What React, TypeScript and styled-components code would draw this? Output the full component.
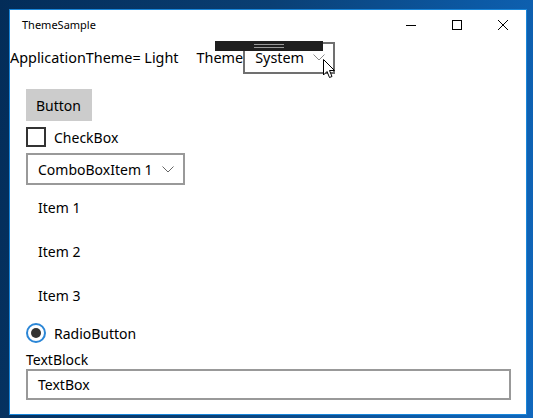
import React from "react";
import styled, { createGlobalStyle } from "styled-components";

const GlobalStyle = createGlobalStyle`
  html, body {
    margin: 0;
    padding: 0;
  }
  body {
    width: 533px;
    height: 418px;
    overflow: hidden;
    background: linear-gradient(100deg, #032c58 0%, #0a3f74 45%, #0c5aa6 80%, #1168bd 100%);
    font-family: "Noto Sans", "Open Sans", sans-serif;
    color: #000000;
  }
`;

const Desktop = styled.div`
  padding: 9px 0 0 9px;
`;

const Window = styled.div`
  width: 516px;
  height: 404px;
  background: #ffffff;
  border: 1px solid #1a86d9;
  display: flex;
  flex-direction: column;
  overflow: hidden;
`;

const TitleBar = styled.div`
  height: 31px;
  display: flex;
  align-items: center;
  justify-content: space-between;
  flex-shrink: 0;
`;

const Title = styled.span`
  font-size: 11px;
  padding-left: 12px;
  margin-top: -2px;
`;

const Captions = styled.div`
  display: flex;
  height: 100%;
`;

const CaptionButton = styled.div`
  width: 46px;
  height: 29px;
  display: flex;
  align-items: center;
  justify-content: center;
`;

const ThemeRow = styled.div`
  height: 32px;
  display: flex;
  align-items: center;
  font-size: 14.4px;
  position: relative;
`;

const ThemeLabel = styled.span<{ $gap?: number }>`
  margin-right: ${(p) => p.$gap ?? 0}px;
  white-space: nowrap;
`;

const ThemeCombo = styled.div`
  box-sizing: border-box;
  flex-shrink: 0;
  width: 92px;
  height: 32px;
  border: 2px solid #707070;
  display: flex;
  align-items: center;
  justify-content: space-between;
  padding: 0 8px 0 10px;
  margin-top: 1px;
  span {
    margin-top: -1px;
  }
`;

const DragBar = styled.div`
  position: absolute;
  left: 205px;
  top: 0;
  width: 108px;
  height: 10px;
  background: #1f1f1f;
  display: flex;
  justify-content: center;
  padding-top: 3px;
  box-sizing: border-box;
`;

const Grip = styled.div`
  width: 30px;
  height: 2px;
  border-top: 1px solid #9a9a9a;
  border-bottom: 1px solid #9a9a9a;
`;

const Cursor = styled.svg`
  position: absolute;
  left: 313px;
  top: 18px;
`;

const Panel = styled.div`
  display: flex;
  flex-direction: column;
  padding: 16px 15px 0 16px;
  font-size: 14px;
`;

const Button = styled.div`
  align-self: flex-start;
  height: 32px;
  padding: 0 11px 0 10px;
  background: #cccccc;
  display: flex;
  align-items: center;
`;

const CheckRow = styled.div`
  height: 32px;
  display: flex;
  align-items: center;
  gap: 8px;
`;

const CheckSquare = styled.div`
  box-sizing: border-box;
  width: 20px;
  height: 20px;
  border: 2px solid #333333;
`;

const Combo = styled.div`
  box-sizing: border-box;
  align-self: flex-start;
  width: 159px;
  height: 32px;
  border: 2px solid #999999;
  display: flex;
  align-items: center;
  justify-content: space-between;
  padding: 0 9px 0 10px;
`;

const ListItem = styled.div`
  height: 44px;
  display: flex;
  align-items: center;
  padding-left: 12px;
`;

const RadioRow = styled.div`
  height: 32px;
  display: flex;
  align-items: center;
  gap: 8px;
`;

const RadioRing = styled.div`
  box-sizing: border-box;
  width: 20px;
  height: 20px;
  border-radius: 50%;
  border: 2px solid #2b86d6;
  display: flex;
  align-items: center;
  justify-content: center;
`;

const RadioDot = styled.div`
  width: 10px;
  height: 10px;
  border-radius: 50%;
  background: #333333;
`;

const TextBlock = styled.div`
  height: 20px;
  display: flex;
  align-items: center;
`;

const TextBox = styled.div`
  box-sizing: border-box;
  height: 31px;
  border: 2px solid #999999;
  display: flex;
  align-items: center;
  padding-left: 10px;
`;

const Chevron = ({ color }: { color: string }) => (
  <svg width="12" height="7" viewBox="0 0 12 7">
    <path d="M0.5 0.5 L6 6 L11.5 0.5" fill="none" stroke={color} strokeWidth="1" />
  </svg>
);

export default function App() {
  return (
    <>
      <GlobalStyle />
      <Desktop>
        <Window>
          <TitleBar>
            <Title>ThemeSample</Title>
            <Captions>
              <CaptionButton>
                <svg width="10" height="10" viewBox="0 0 10 10">
                  <path d="M0 5.5 H10" stroke="#000" strokeWidth="1" />
                </svg>
              </CaptionButton>
              <CaptionButton>
                <svg width="10" height="10" viewBox="0 0 10 10">
                  <rect x="0.5" y="0.5" width="9" height="9" fill="none" stroke="#000" strokeWidth="1" />
                </svg>
              </CaptionButton>
              <CaptionButton>
                <svg width="10" height="10" viewBox="0 0 10 10">
                  <path d="M0 0 L10 10 M10 0 L0 10" stroke="#000" strokeWidth="1" />
                </svg>
              </CaptionButton>
            </Captions>
          </TitleBar>

          <ThemeRow>
            <ThemeLabel $gap={18}>ApplicationTheme= Light</ThemeLabel>
            <ThemeLabel>Theme</ThemeLabel>
            <ThemeCombo>
              <span>System</span>
              <Chevron color="#8a8a8a" />
            </ThemeCombo>
            <DragBar>
              <Grip />
            </DragBar>
            <Cursor width="13" height="20" viewBox="0 0 13 20">
              <path
                d="M0.5 0.5 L0.5 16 L4 12.5 L6.5 18.5 L9 17.5 L6.5 11.5 L11.5 11.5 Z"
                fill="#ffffff"
                stroke="#000000"
                strokeWidth="1"
                strokeLinejoin="miter"
              />
            </Cursor>
          </ThemeRow>

          <Panel>
            <Button>Button</Button>
            <CheckRow>
              <CheckSquare />
              <span>CheckBox</span>
            </CheckRow>
            <Combo>
              <span>ComboBoxItem 1</span>
              <Chevron color="#666666" />
            </Combo>
            <ListItem>Item 1</ListItem>
            <ListItem>Item 2</ListItem>
            <ListItem>Item 3</ListItem>
            <RadioRow>
              <RadioRing>
                <RadioDot />
              </RadioRing>
              <span>RadioButton</span>
            </RadioRow>
            <TextBlock>TextBlock</TextBlock>
            <TextBox>TextBox</TextBox>
          </Panel>
        </Window>
      </Desktop>
    </>
  );
}
